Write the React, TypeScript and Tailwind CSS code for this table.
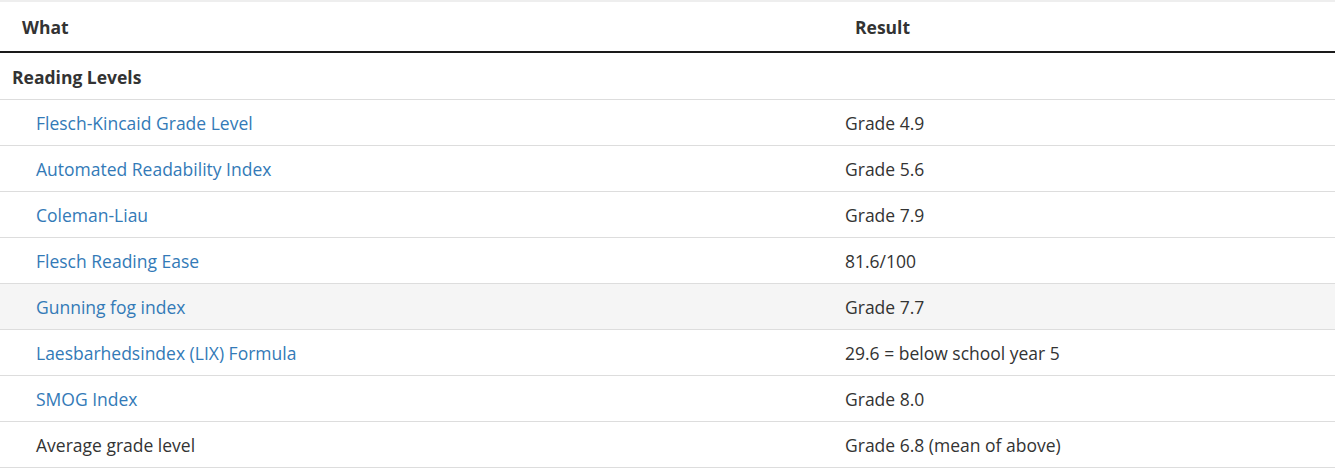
import React from "react";

const rows: { name: string; result: string; link: boolean; hover?: boolean }[] = [
  { name: "Flesch-Kincaid Grade Level", result: "Grade 4.9", link: true },
  { name: "Automated Readability Index", result: "Grade 5.6", link: true },
  { name: "Coleman-Liau", result: "Grade 7.9", link: true },
  { name: "Flesch Reading Ease", result: "81.6/100", link: true },
  { name: "Gunning fog index", result: "Grade 7.7", link: true, hover: true },
  { name: "Laesbarhedsindex (LIX) Formula", result: "29.6 = below school year 5", link: true },
  { name: "SMOG Index", result: "Grade 8.0", link: true },
  { name: "Average grade level", result: "Grade 6.8 (mean of above)", link: false },
];

export default function App() {
  return (
    <div className="w-[1335px] bg-white text-[#333] text-[17.5px] font-['Open_Sans',sans-serif]">
      <div className="border-t-2 border-[#eeeeee]" />
      <div className="grid grid-cols-[833px_1fr] h-[51px] pt-[2px] items-center border-b-2 border-[#1a1a1a] font-bold">
        <div className="pl-[22px]">What</div>
        <div className="pl-[22px]">Result</div>
      </div>
      <div className="h-[47px] pt-[2px] flex items-center pl-[12px] font-bold border-b border-[#dddddd]">
        Reading Levels
      </div>
      {rows.map((r) => (
        <div
          key={r.name}
          className={`grid grid-cols-[833px_1fr] h-[46px] pt-[2px] items-center border-b border-[#dddddd] ${r.hover ? "bg-[#f5f5f5]" : ""}`}
        >
          <div className={`pl-[36px] ${r.link ? "text-[#337ab7]" : ""}`}>{r.name}</div>
          <div className="pl-[12px]">{r.result}</div>
        </div>
      ))}
    </div>
  );
}
